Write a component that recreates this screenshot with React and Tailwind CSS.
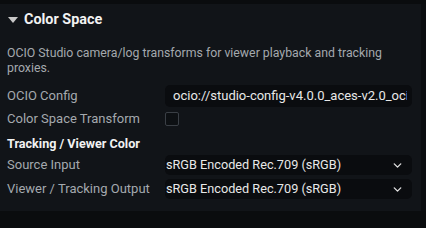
import { ChevronDown } from "lucide-react";

const font = { fontFamily: "Roboto, 'Liberation Sans', sans-serif" };

function Row({ label, children, className = "" }) {
  return (
    <div className={`grid grid-cols-[158px_247px] items-center ${className}`}>
      <span className="text-[13px] text-[#a4a9ae] whitespace-nowrap">{label}</span>
      {children}
    </div>
  );
}

function Select({ value }) {
  return (
    <div className="h-[20px] rounded-[5px] bg-[#0a0c0f] flex items-center justify-between pl-[1px] pr-[8px]">
      <span className="text-[12.7px] text-[#e8e8e8] whitespace-nowrap">{value}</span>
      <ChevronDown size={13} strokeWidth={2.5} className="text-[#e0e0e0]" />
    </div>
  );
}

export default function App() {
  return (
    <div className="w-[426px] h-[228px] bg-[#0a0c0e] pt-[4px] overflow-hidden" style={font}>
      <div className="flex">
        <div className="w-[421px] h-[207px] bg-[#111418] pl-[7px] flex flex-col">
          <div className="h-[32px] flex items-center gap-[6px]">
            <svg width="10" height="6" viewBox="0 0 10 6" className="ml-[1px]">
              <polygon points="0,0 10,0 5,6" fill="#c8c8c8" />
            </svg>
            <span className="text-[14.4px] font-bold text-[#f2f2f2]">Color Space</span>
          </div>

          <p className="mt-[10px] text-[12.3px] leading-[15px] text-[#a4a9ae] pr-[10px]">
            OCIO Studio camera/log transforms for viewer playback and tracking proxies.
          </p>

          <Row label="OCIO Config" className="mt-[9px]">
            <div className="h-[22px] rounded-[5px] bg-[#0a0c0f] flex items-center pl-[8px] pr-[5px]">
              <div className="flex-1 overflow-hidden">
                <span className="block text-[13px] text-[#e8e8e8] whitespace-nowrap">
                  ocio://studio-config-v4.0.0_aces-v2.0_ocio-v2.4
                </span>
              </div>
            </div>
          </Row>

          <Row label="Color Space Transform" className="mt-[2px] h-[18px]">
            <div className="w-[14px] h-[14px] border border-[#3a3f45] rounded-[2px] bg-[#0d1013]" />
          </Row>

          <div className="mt-[9px] h-[16px] flex items-center text-[12.6px] font-bold text-[#f2f2f2]">
            Tracking / Viewer Color
          </div>

          <Row label="Source Input" className="mt-[3px]">
            <Select value="sRGB Encoded Rec.709 (sRGB)" />
          </Row>
          <Row label="Viewer / Tracking Output" className="mt-[4px]">
            <Select value="sRGB Encoded Rec.709 (sRGB)" />
          </Row>
        </div>
        <div className="w-[5px] h-[207px] bg-[#0b0d10]" />
      </div>
    </div>
  );
}
